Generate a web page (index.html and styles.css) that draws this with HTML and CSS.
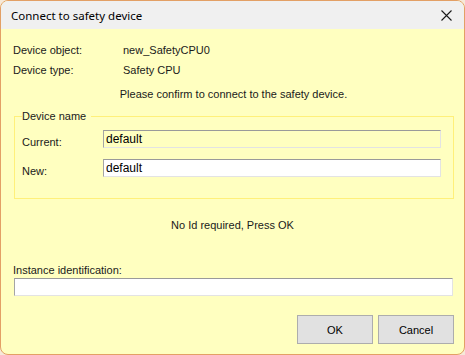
FILE: index.html
```html
<!DOCTYPE html>
<html lang="en">

<head>
    <meta charset="UTF-8">
    <title>Connect to safety device</title>
    <link rel="stylesheet" href="styles.css">
</head>

<body>
    <div class="window">
        <!-- title bar -->
        <div class="title-bar">
            <span class="title">Connect to safety device</span>
            <span class="close-btn">
                <svg width="11" height="11" viewBox="0 0 11 11">
                    <path d="M0.5 0.5 L10.5 10.5 M10.5 0.5 L0.5 10.5" stroke="#1a1a1a" stroke-width="1.1" fill="none" />
                </svg>
            </span>
        </div>

        <!-- dialog content -->
        <div class="content">
            <div class="info-row">
                <span class="info-label">Device object:</span>
                <span>new_SafetyCPU0</span>
            </div>
            <div class="info-row">
                <span class="info-label">Device type:</span>
                <span>Safety CPU</span>
            </div>
            <div class="confirm">Please confirm to connect to the safety device.</div>

            <fieldset class="group">
                <legend>Device name</legend>
                <div class="field-row">
                    <label class="field-label">Current:</label>
                    <input class="text-input readonly" type="text" value="default" readonly>
                </div>
                <div class="field-row">
                    <label class="field-label">New:</label>
                    <input class="text-input" type="text" value="default">
                </div>
            </fieldset>

            <div class="hint">No Id required, Press OK</div>

            <div class="instance-label">Instance identification:</div>
            <input class="text-input instance-input" type="text">

            <div class="buttons">
                <button class="btn">OK</button>
                <button class="btn">Cancel</button>
            </div>
        </div>
    </div>
</body>

</html>
```

FILE: styles.css
```css
* {
    margin: 0;
    padding: 0;
    box-sizing: border-box;
}

html,
body {
    width: 465px;
    height: 355px;
    background: #f6e9d8;
    overflow: hidden;
}

body {
    font-family: "Liberation Sans", Arial, sans-serif;
    font-size: 11px;
    color: #1a1a1a;
}

/* window frame */
.window {
    width: 465px;
    height: 355px;
    border: 1px solid #e3a065;
    border-radius: 8px;
    overflow: hidden;
    background-color: #ffffc0;
    display: flex;
    flex-direction: column;
}

.title-bar {
    height: 28px;
    flex-shrink: 0;
    background-color: #f0f0f0;
    display: flex;
    align-items: center;
    justify-content: space-between;
    padding: 0 12px 0 10px;
}

.title {
    font-family: "Noto Sans", sans-serif;
    font-size: 11.5px;
    color: #000;
}

.close-btn {
    display: flex;
    align-items: center;
    margin-top: 1px;
}

.content {
    padding: 11px 12px 0 12px;
    display: flex;
    flex-direction: column;
}

.info-row {
    display: flex;
    line-height: 20px;
}

.info-label {
    width: 110px;
}

.confirm {
    margin-top: 4px;
    line-height: 20px;
    text-align: center;
    padding-left: 2px;
}

/* group box */
.group {
    margin: 5px -2px 0 1px;
    border: 1px solid #fff07a;
    padding: 7px 12px 21px 7px;
}

.group legend {
    line-height: 14px;
    padding: 0 5px 0 0;
    margin-left: 0;
}

.field-row {
    display: flex;
    align-items: center;
}

.field-row+.field-row {
    margin-top: 11px;
}

.field-label {
    width: 81px;
    flex-shrink: 0;
    padding-top: 6px;
}

.text-input {
    height: 18px;
    flex: 1;
    font-family: "Liberation Sans", Arial, sans-serif;
    font-size: 12px;
    color: #000;
    padding: 0 2px;
    background-color: #ffffff;
    border: 1px solid #e3e3e3;
    border-top-color: #9a9a9a;
    border-left-color: #a5a5a5;
    outline: none;
}

.text-input.readonly {
    background-color: #ffffc0;
}

.hint {
    margin-top: 19px;
    line-height: 14px;
    text-align: center;
}

.instance-label {
    margin-top: 31px;
    line-height: 14px;
}

.instance-input {
    flex: none;
    margin: 1px -1px 0 1px;
}

/* buttons */
.buttons {
    display: flex;
    justify-content: flex-end;
    gap: 5px;
    margin: 19px -2px 0 0;
}

.btn {
    width: 76px;
    height: 29px;
    font-family: "Liberation Sans", Arial, sans-serif;
    font-size: 11px;
    color: #000;
    background-color: #e1e1e1;
    border: 1px solid #adadad;
}
```
